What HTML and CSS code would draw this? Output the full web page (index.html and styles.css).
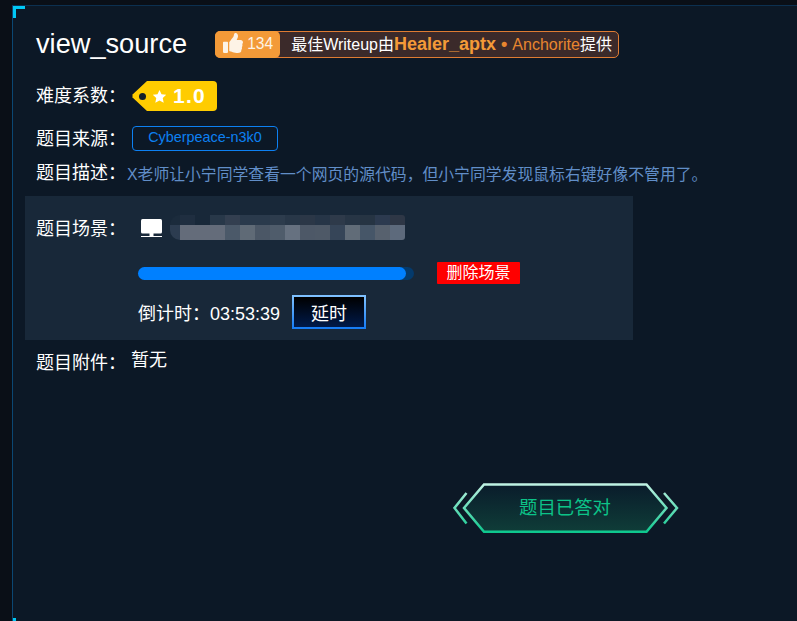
FILE: index.html
```html
<!DOCTYPE html>
<html lang="zh-CN">
<head>
<meta charset="utf-8">
<title>view_source</title>
<link rel="stylesheet" href="styles.css">
</head>
<body>
<main class="panel">
  <header class="title-row">
    <h1 class="title">view_source</h1>
    <div class="wp-badge">
      <span class="wp-likes">
        <svg class="thumb" viewBox="0 0 512 512"><path d="M104 224H24c-13.255 0-24 10.745-24 24v240c0 13.255 10.745 24 24 24h80c13.255 0 24-10.745 24-24V248c0-13.255-10.745-24-24-24zM384 81.452c0 42.416-25.97 66.208-33.277 94.548h101.723c33.397 0 59.397 27.746 59.553 58.098.084 17.938-7.546 37.249-19.439 49.197l-.11.11c9.836 23.337 8.237 56.037-9.308 79.469 8.681 25.895-.069 57.704-16.382 74.757 4.298 17.598 2.244 32.575-6.148 44.632C440.202 511.587 389.616 512 346.839 512l-2.845-.001c-48.287-.017-87.806-17.598-119.56-31.725-15.957-7.099-36.821-15.887-52.651-16.178-6.54-.12-11.783-5.457-11.783-11.998v-213.77c0-3.2 1.282-6.271 3.56-8.52 39.614-39.144 56.648-80.587 89.117-113.111 14.804-14.832 20.188-37.236 25.393-58.902C282.515 39.293 291.817 0 312 0c24 0 72 8 72 81.452z"/></svg>
        134
      </span>
      <span class="wp-text">最佳Writeup由<b class="wp-best">Healer_aptx</b><span class="wp-dot"> • </span><span class="wp-other">Anchorite</span>提供</span>
    </div>
  </header>

  <div class="row row-level">
    <span class="label">难度系数：</span>
    <span class="tag">
      <svg class="star" viewBox="0 0 24 24"><path d="M12 1.500l3.200 6.900 7.600.9-5.600 5.200 1.500 7.500L12 18.300l-6.700 3.700 1.500-7.500L1.200 9.300l7.600-.9z"/></svg>
      <span class="tag-value">1.0</span>
    </span>
  </div>

  <div class="row row-source">
    <span class="label">题目来源：</span>
    <span class="source">Cyberpeace-n3k0</span>
  </div>

  <div class="row row-desc">
    <span class="label">题目描述：</span>
    <span class="desc">X老师让小宁同学查看一个网页的源代码，但小宁同学发现鼠标右键好像不管用了。</span>
  </div>

  <section class="scene">
    <span class="label scene-label">题目场景：</span>
    <div class="scene-body">
      <div class="scene-addr">
        <svg class="monitor" viewBox="0 0 21 18"><rect x="0" y="0" width="21" height="14.5" rx="1.5"/><rect x="8.5" y="14" width="4" height="3"/><rect x="0" y="17" width="21" height="1"/></svg>
        <div class="mosaic"></div>
      </div>
      <div class="scene-progress">
        <div class="track"><div class="fill"></div></div>
        <button class="delete">删除场景</button>
      </div>
      <div class="scene-timer">
        <span class="timer">倒计时：03:53:39</span>
        <button class="extend">延时</button>
      </div>
    </div>
  </section>

  <div class="row row-attach">
    <span class="label">题目附件：</span>
    <span class="none">暂无</span>
  </div>

  <div class="answer-wrap">
    <div class="answer">
      <svg class="answer-bg" viewBox="0 0 226 51">
        <defs>
          <linearGradient id="edge" gradientUnits="userSpaceOnUse" x1="0" y1="0" x2="0" y2="50">
            <stop offset="0" stop-color="#c4f3e5"/>
            <stop offset="1" stop-color="#0bc78c"/>
          </linearGradient>
          <linearGradient id="body" x1="0" y1="0" x2="0" y2="1">
            <stop offset="0" stop-color="#0a1c2b"/>
            <stop offset="1" stop-color="#0f3d38"/>
          </linearGradient>
        </defs>
        <path d="M31 1.500H193.500L213.500 25 193.500 48.800H31L11 25z" fill="url(#body)" stroke="url(#edge)" stroke-width="2.500"/>
        <path d="M13.500 10L1.500 25 13.500 40.500" fill="none" stroke="url(#edge)" stroke-width="2.500"/>
        <path d="M211 10L224 25 211 40.500" fill="none" stroke="url(#edge)" stroke-width="2.500"/>
      </svg>
      <span class="answer-text">题目已答对</span>
    </div>
  </div>
</main>
</body>
</html>
```
FILE: styles.css
```css
* { box-sizing: border-box; }
html, body { margin: 0; height: 100%; }
body {
  background: #0a0f17;
  padding: 5px 0 0 12px;
  overflow: hidden;
  font-family: "Liberation Sans", "Noto Sans CJK SC", sans-serif;
  color: #fff;
  font-size: 16px;
}
.panel {
  position: relative;
  height: 640px;
  padding: 25px 0 0 23px;
  background: #0c1826;
  border-left: 1px solid #0b4773;
  border-top: 1px solid #0c3050;
}
.panel::before, .panel::after {
  content: "";
  position: absolute;
  left: 0;
  width: 9px;
  height: 9px;
  border-left: 3px solid #00c8f5;
}
.panel::before { top: 0; border-top: 3px solid #00c8f5; }
.panel::after { top: 612px; }

.title-row { display: flex; align-items: center; height: 27px; }
.title { margin: -2px 0 0; font-size: 27.2px; font-weight: 400; line-height: 27px; }
.wp-badge {
  display: flex;
  align-items: stretch;
  margin-left: 28px;
  width: 404px;
  height: 27px;
  background: #3b2a2a;
  border: 1px solid #df7c33;
  border-radius: 5px;
}
.wp-likes {
  display: flex;
  align-items: center;
  gap: 4px;
  width: 65px;
  margin: -1px 0 -1px -1px;
  padding: 0 0 2px 8px;
  background: #f39a38;
  border-radius: 5px;
  font-size: 15.6px;
  color: #fdf3e6;
}
.thumb { width: 20px; height: 20px; fill: #fdf3e6; margin-top: -2px; }
.wp-text { padding-left: 11px; line-height: 25px; white-space: nowrap; }
.wp-best { color: #f39a38; font-size: 18px; }
.wp-dot { color: #e8862f; font-size: 18px; font-weight: 700; }
.wp-other { color: #e8862f; }

.row { display: flex; align-items: center; }
.label { font-size: 18px; line-height: 24px; white-space: nowrap; }
.row-level { margin-top: 23px; height: 30px; }
.row-level .label { margin-top: -1px; }
.tag {
  position: relative;
  display: flex;
  align-items: center;
  margin-left: 6px;
  width: 85px;
  height: 30px;
  padding-left: 20px;
  background: #ffcc00;
  border-radius: 0 4px 4px 0;
  clip-path: polygon(0 47%, 1px 50%, 0 53%, 15px 100%, 100% 100%, 100% 0, 15px 0);
}
.tag::before {
  content: "";
  position: absolute;
  left: 7px;
  top: 12px;
  width: 7px;
  height: 7px;
  border-radius: 50%;
  background: #14202a;
}
.star { width: 15px; height: 15px; fill: #fff; }
.tag-value { margin-left: 6px; font-size: 21px; font-weight: 700; letter-spacing: 1.2px; }
.row-source { margin-top: 15px; height: 25px; }
.source {
  margin-left: 6px;
  width: 146px;
  height: 25px;
  border: 1px solid #0d80f2;
  border-radius: 4px;
  color: #0d80f2;
  font-size: 14.4px;
  line-height: 21px;
  text-align: center;
}
.row-desc { margin-top: 10px; height: 24px; }
.desc { margin-left: 1px; color: #618ec8; font-size: 15.84px; white-space: nowrap; }

.scene {
  display: grid;
  grid-template-columns: 102px auto;
  width: 608px;
  height: 144px;
  margin: 11px 0 0 -11px;
  padding: 19px 0 0 11px;
  background: #182839;
}
.scene-label { padding-top: 2px; }
.scene-addr { display: flex; height: 25px; }
.monitor { width: 21px; height: 18px; margin: 4px 0 0 3px; fill: #fff; }
.mosaic {
  width: 235px;
  height: 25px;
  margin-left: 8px;
  border-radius: 10px 3px 3px 10px;
  background:
    linear-gradient(90deg, #2c3c50 10px, #646c7a 10px 55px, #4b5969 55px 70px, #5f6a76 70px 85px, #4b5766 85px 100px, #4f5c6b 100px 115px, #667180 115px 130px, #4d5867 130px 145px, #4e5967 145px 160px, #364558 160px 175px, #616c78 175px 190px, #465668 190px 205px, #57616e 205px 220px, #5d6a7c 220px 235px) 0 10px / 100% 15px no-repeat,
    linear-gradient(90deg, #1b2b3c 10px, #1f2e40 10px 25px, #182839 25px 40px, #283849 40px 55px, #333f50 55px 70px, #2a3a4c 70px 100px, #2d3c4d 100px 115px, #283748 115px 130px, #2b3747 130px 145px, #263547 145px 160px, #2e3a4a 160px 175px, #273545 175px 190px, #263443 190px 205px, #2c3a4f 205px 220px, #2e3746 220px 235px) 0 0 / 100% 10px no-repeat;
}
.scene-progress { display: flex; align-items: center; margin-top: 22px; height: 22px; }
.track { width: 276px; height: 13px; border-radius: 7px; background: #043a6c; }
.fill { width: 268px; height: 13px; border-radius: 7px; background: #0080ff; }
.delete {
  margin-left: 23px;
  width: 83px;
  height: 22px;
  padding: 0;
  border: 0;
  border-radius: 1px;
  background: #ff0000;
  color: #fff;
  font: inherit;
  line-height: 22px;
}
.scene-timer { display: flex; align-items: center; margin-top: 11px; height: 34px; }
.timer { font-size: 18px; margin-top: -1px; white-space: nowrap; }
.extend {
  margin-left: 12px;
  width: 74px;
  height: 34px;
  padding: 0;
  border: 2px solid;
  border-image: linear-gradient(#7fc1ff, #167cf5) 1;
  background: linear-gradient(#000, #001a4a);
  color: #fff;
  font: inherit;
  font-size: 18px;
}

.row-attach { margin-top: 10px; height: 24px; }
.row-attach .label { margin-top: 2px; }
.none { margin: -4px 0 0 5px; font-size: 18px; line-height: 24px; }

.answer-wrap { display: flex; margin: 109px 0 0 417px; }
.answer {
  position: relative;
  display: flex;
  align-items: center;
  justify-content: center;
  width: 226px;
  height: 51px;
}
.answer-bg { position: absolute; inset: 0; width: 226px; height: 51px; }
.answer-text { position: relative; margin: -5px 0 0 -2px; color: #0cc388; font-size: 18.4px; }
```
